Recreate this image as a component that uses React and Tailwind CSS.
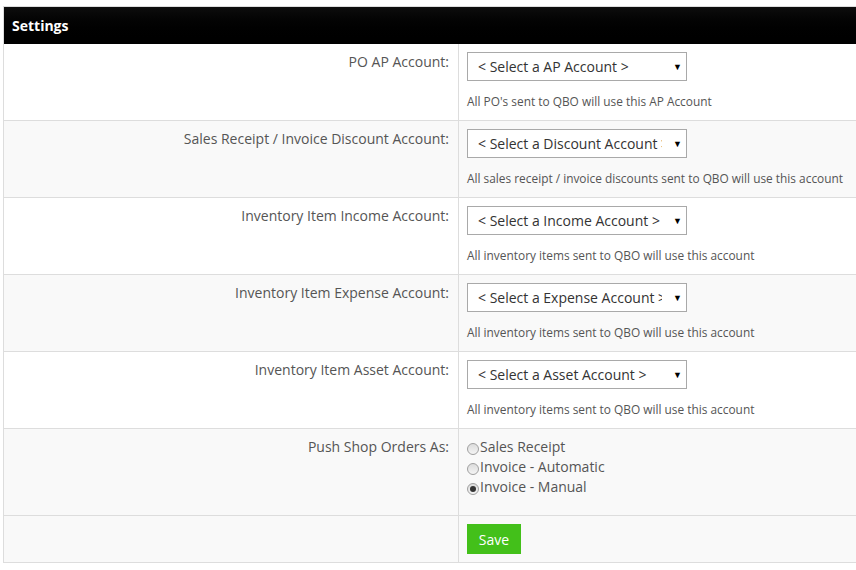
const accountRows = [
  { label: "PO AP Account:", placeholder: "< Select a AP Account >", help: "All PO's sent to QBO will use this AP Account" },
  { label: "Sales Receipt / Invoice Discount Account:", placeholder: "< Select a Discount Account >", help: "All sales receipt / invoice discounts sent to QBO will use this account" },
  { label: "Inventory Item Income Account:", placeholder: "< Select a Income Account >", help: "All inventory items sent to QBO will use this account" },
  { label: "Inventory Item Expense Account:", placeholder: "< Select a Expense Account >", help: "All inventory items sent to QBO will use this account" },
  { label: "Inventory Item Asset Account:", placeholder: "< Select a Asset Account >", help: "All inventory items sent to QBO will use this account" },
]

const pushOptions = ["Sales Receipt", "Invoice - Automatic", "Invoice - Manual"]

function FakeSelect({ text }) {
  return (
    <div className="w-[220px] h-[29px] border border-[#a9a9a9] bg-white flex items-center pl-[10px]">
      <span className="w-[184px] overflow-hidden whitespace-nowrap text-[14px] text-[#333]">{text}</span>
      <span className="text-[9px] text-black ml-[11px]">▼</span>
    </div>
  )
}

function Radio({ checked }) {
  return (
    <span className="w-[12px] h-[12px] mt-[6px] rounded-full border border-[#a0a0a0] bg-gradient-to-b from-[#dcdcdc] to-[#f4f4f4] flex items-center justify-center">
      {checked && <span className="w-[6px] h-[6px] rounded-full bg-[#333]"></span>}
    </span>
  )
}

export default function App() {
  return (
    <div className="w-[856px] h-[570px] overflow-hidden bg-white pt-[6px] pl-[3px] font-['Open_Sans',sans-serif]">
      <div className="w-[870px] border-l border-t border-[#ddd]">
        <div className="h-[37px] bg-gradient-to-b from-[#0e0e0e] to-[#000] flex items-center pl-[8px]">
          <h1 className="text-[14px] font-bold text-white">Settings</h1>
        </div>

        {accountRows.map((row, i) => (
          <div
            key={row.label}
            className={`grid grid-cols-[455px_1fr] h-[77px] border-b border-[#ddd] ${i % 2 === 1 ? "bg-[#f9f9f9]" : "bg-white"}`}
          >
            <div className="border-r border-[#ddd] text-right pr-[9px] pt-[8px] text-[14px] leading-[20px] text-[#555]">
              {row.label}
            </div>
            <div className="pl-[8px] pt-[8px]">
              <FakeSelect text={row.placeholder} />
              <p className="mt-[12px] text-[11.88px] text-[#555]">{row.help}</p>
            </div>
          </div>
        ))}

        <div className="grid grid-cols-[455px_1fr] h-[87px] border-b border-[#ddd] bg-[#f9f9f9]">
          <div className="border-r border-[#ddd] text-right pr-[9px] pt-[8px] text-[14px] leading-[20px] text-[#555]">
            Push Shop Orders As:
          </div>
          <div className="pl-[8px] pt-[8px] flex flex-col">
            {pushOptions.map((opt, i) => (
              <label key={opt} className="flex items-start gap-[1px] text-[14px] leading-[20px] text-[#555]">
                <Radio checked={i === 2} />
                {opt}
              </label>
            ))}
          </div>
        </div>

        <div className="grid grid-cols-[455px_1fr] h-[47px] border-b border-[#ddd] bg-[#f9f9f9]">
          <div className="border-r border-[#ddd]"></div>
          <div className="pl-[8px] pt-[8px]">
            <button className="w-[54px] h-[30px] bg-[#43c01a] text-white text-[14px]">Save</button>
          </div>
        </div>
      </div>
    </div>
  )
}
